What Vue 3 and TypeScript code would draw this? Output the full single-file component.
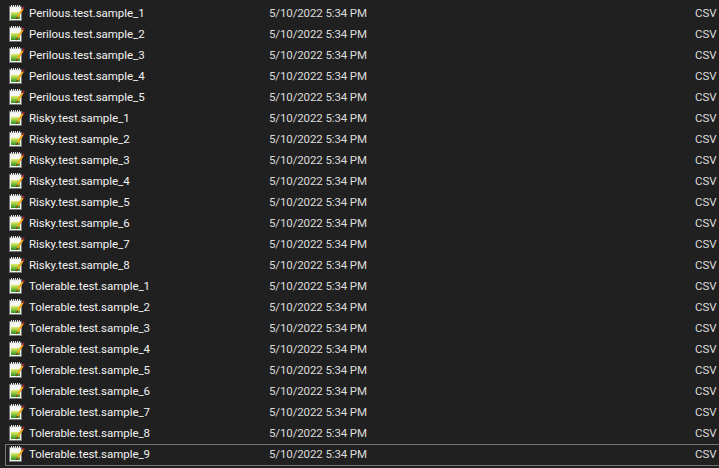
<template>
  <div class="list">
    <div v-for="row in rows" :key="row" class="row" :class="{ focused: row === focusedRow }">
      <span class="icon">
        <svg width="18" height="18" viewBox="0 0 18 18">
          <defs>
            <linearGradient id="sheet" x1="0" y1="0" x2="0" y2="1">
              <stop offset="0" stop-color="#e8ec70" />
              <stop offset="0.5" stop-color="#86c63c" />
              <stop offset="1" stop-color="#2f8a2a" />
            </linearGradient>
          </defs>
          <rect x="1.5" y="2.5" width="12" height="14" fill="#f6f6f2" stroke="#77777a" />
          <path d="M3.5 1v3M5.5 1v3M7.5 1v3M9.5 1v3M11.5 1v3" stroke="#e6e6e6" />
          <rect x="3" y="8" width="9" height="7" fill="url(#sheet)" />
          <path d="M8 15.5l.8-3.2L14 4.2l1.6 1.1-5.3 8.1z" fill="#f2a91f" />
          <path d="M8 15.5l.8-3.2 1.6 1.1z" fill="#5a3d1c" />
          <path d="M14 4.2l1.2-1.8 1.6 1.1-1.2 1.8z" fill="#b3262a" />
        </svg>
      </span>
      <span class="name">{{ row }}</span>
      <span class="date">5/10/2022 5:34 PM</span>
      <span class="type">CSV</span>
    </div>
  </div>
</template>

<script setup lang="ts">
const groups: Array<[string, number]> = [
  ['Perilous', 5],
  ['Risky', 8],
  ['Tolerable', 9]
]

const rows: string[] = groups.flatMap(([label, count]) =>
  Array.from({ length: count }, (_, i) => `${label}.test.sample_${i + 1}`)
)

const focusedRow = 'Tolerable.test.sample_9'
</script>

<style>
html,
body {
  margin: 0;
  background: #202020;
  overflow: hidden;
}
</style>

<style scoped>
.list {
  display: flex;
  flex-direction: column;
  padding: 3px 0 0 6px;
  font-family: Roboto, "Open Sans", sans-serif;
  font-size: 11.5px;
  color: #dcdcdc;
}

.row {
  display: flex;
  align-items: center;
  height: 21px;
  padding-bottom: 1px;
  box-sizing: border-box;
  white-space: nowrap;
}

.row.focused {
  height: 22px;
  margin-left: -1px;
  padding-bottom: 2px;
  border: 1px solid #777;
  border-right: none;
}

.icon {
  display: flex;
  width: 23px;
  flex: none;
  padding-left: 2px;
  box-sizing: border-box;
}

.name {
  width: 240px;
  flex: none;
  letter-spacing: -0.04px;
  color: #f2f2f2;
}

.date {
  width: 426px;
  flex: none;
  letter-spacing: -0.12px;
}
</style>
